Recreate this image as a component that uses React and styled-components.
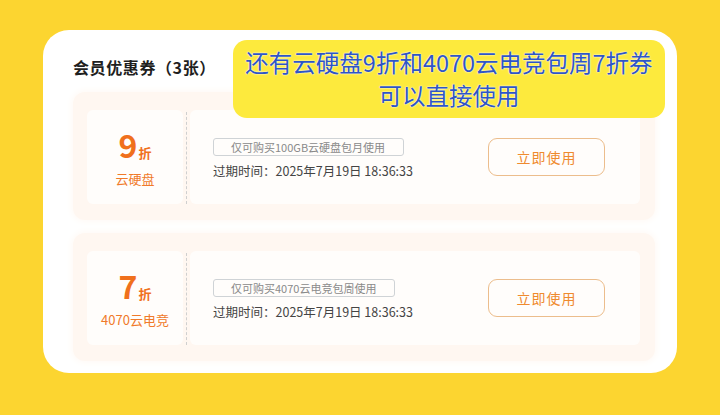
import React from 'react';
import styled, { createGlobalStyle } from 'styled-components';

const coupons = [
  {
    rate: '9',
    name: '云硬盘',
    limit: '仅可购买100GB云硬盘包月使用',
    expire: '过期时间：2025年7月19日 18:36:33',
  },
  {
    rate: '7',
    name: '4070云电竞',
    limit: '仅可购买4070云电竞包周使用',
    expire: '过期时间：2025年7月19日 18:36:33',
  },
];

const App = () => {
  return (
    <Page>
      <GlobalStyle />
      <Card>
        <Title>会员优惠券（3张）</Title>
        <List>
          {coupons.map((c) => (
            <Coupon key={c.rate}>
              <Left>
                <Rate>
                  {c.rate}
                  <Unit>折</Unit>
                </Rate>
                <Name>{c.name}</Name>
              </Left>
              <Divider />
              <Right>
                <Info>
                  <Limit>{c.limit}</Limit>
                  <Expire>{c.expire}</Expire>
                </Info>
                <UseButton>立即使用</UseButton>
              </Right>
            </Coupon>
          ))}
        </List>
        <Sticker>
          <span>还有云硬盘9折和4070云电竞包周7折券</span>
          <span>可以直接使用</span>
        </Sticker>
      </Card>
    </Page>
  );
};

export default App;

const GlobalStyle = createGlobalStyle`
    html, body {
        margin: 0;
        padding: 0;
        background: #fcd530;
    }
    body {
        font-family: "Noto Sans CJK SC", "Noto Sans", sans-serif;
    }
`;

const Page = styled.div`
    width: 720px;
    height: 415px;
    padding: 30px 43px 0;
    box-sizing: border-box;
    background: #fcd530;
`;

const Card = styled.div`
    position: relative;
    width: 634px;
    height: 343px;
    box-sizing: border-box;
    padding: 25px 22px 0 30px;
    background: #fff;
    border-radius: 26px;
    display: flex;
    flex-direction: column;
`;

const Title = styled.div`
    font-size: 16px;
    line-height: 24px;
    font-weight: 700;
    letter-spacing: 0.6px;
    color: #1f1f1f;
    margin-bottom: 13px;
`;

const List = styled.div`
    display: flex;
    flex-direction: column;
    gap: 13px;
`;

const Coupon = styled.div`
    display: flex;
    align-items: stretch;
    height: 128px;
    box-sizing: border-box;
    padding: 18px 15px 16px 14px;
    background: #fff7f1;
    border-radius: 12px;
    box-shadow: 0 0 6px 2px #fffaf6;
`;

const Left = styled.div`
    width: 96px;
    background: #fffdfb;
    border-radius: 6px;
    display: flex;
    flex-direction: column;
    align-items: center;
    justify-content: center;
    color: #f0701c;
`;

const Rate = styled.div`
    font-size: 32px;
    line-height: 34px;
    font-weight: 700;
    display: flex;
    align-items: baseline;
`;

const Unit = styled.span`
    font-size: 13px;
    margin-left: 1px;
`;

const Name = styled.div`
    font-size: 13px;
    line-height: 18px;
    color: #f07a2a;
`;

const Divider = styled.div`
    width: 0;
    margin: 2px 3px 0 3px;
    border-left: 1px dashed #cfcfcf;
`;

const Right = styled.div`
    flex: 1;
    background: #fffdfb;
    border-radius: 6px;
    display: flex;
    align-items: center;
    justify-content: space-between;
    padding: 0 35px 0 23px;
`;

const Info = styled.div`
    display: flex;
    flex-direction: column;
    align-items: flex-start;
    gap: 6px;
    margin-top: 3px;
`;

const Limit = styled.div`
    font-size: 11px;
    line-height: 16px;
    color: #8a8a8a;
    padding: 0 18px 0 17px;
    border: 1px solid #cfd3d6;
    border-radius: 3px;
`;

const Expire = styled.div`
    font-size: 12.5px;
    line-height: 18px;
    color: #444;
`;

const UseButton = styled.button`
    width: 117px;
    height: 38px;
    box-sizing: border-box;
    border: 1.5px solid #ecbd8c;
    border-radius: 9px;
    background: #fffdfb;
    color: #ef8a2e;
    font-family: inherit;
    font-size: 14px;
    letter-spacing: 1px;
    cursor: pointer;
`;

const Sticker = styled.div`
    position: absolute;
    left: 190px;
    top: 10px;
    width: 432px;
    height: 78px;
    background: #fdea3d;
    border-radius: 14px;
    display: flex;
    flex-direction: column;
    align-items: center;
    justify-content: center;
    font-size: 23.5px;
    line-height: 33px;
    color: #2f55c4;
    text-shadow: 0 0 2px #fff, 0 0 1px #fff;
`;
